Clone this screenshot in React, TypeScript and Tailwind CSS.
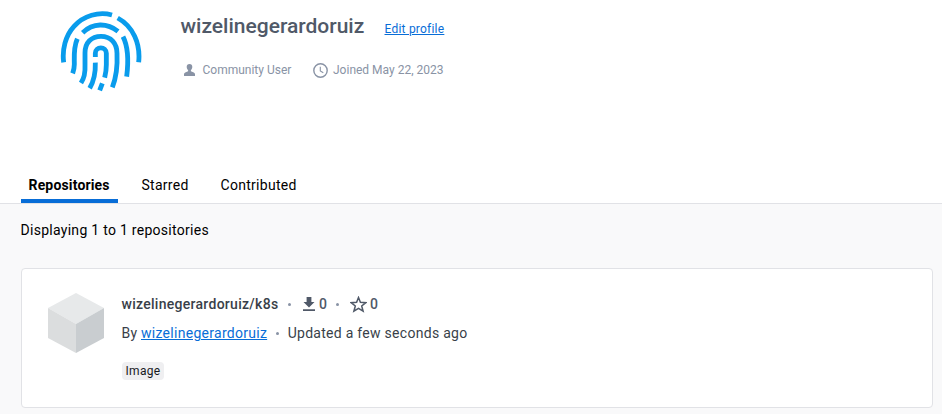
function Fingerprint() {
  return (
    <svg className="h-[82px] w-[82px] shrink-0" viewBox="30 30 246 246" fill="none" stroke="#099cec" strokeWidth="14.5">
      <path d="M41 187C36 150 46 107 72 79C101 47 146 34 186 45M203 54C249 79 272 130 266 187" />
      <path d="M98 98C129 68 171 68 204 94M82 116C70 143 73 171 73 193C73 202 71 212 68 220M219 110C234 139 235 190 230 230" />
      <path d="M93 249C103 234 106 214 105 195V159C105 128 124 109 153 109C183 109 201 130 201 160C203 202 198 234 187 262" />
      <path d="M136 171V160C136 138 169 138 169 160V194C169 209 167 221 164 233M136 188C137 219 130 246 119 265M157 250L149 271" />
    </svg>
  );
}

function Dot() {
  return <span className="h-[3px] w-[3px] shrink-0 rounded-full bg-[#8993a5]" />;
}

function Cube() {
  return (
    <svg className="h-[60px] w-[56px] shrink-0" viewBox="0 0 56 60">
      <path fill="#e7e9ea" d="M28 0L56 15L28 31L0 15Z" />
      <path fill="#dbddde" d="M0 15L28 31V60L0 45Z" />
      <path fill="#c9cdd0" d="M56 15L28 31V60L56 45Z" />
    </svg>
  );
}

export default function App() {
  return (
    <div className="flex h-[414px] w-full flex-col overflow-hidden bg-white font-['Roboto',sans-serif] text-black">
      <header className="flex h-[167px] pl-[60px] pt-[10px]">
        <Fingerprint />
        <div className="pl-[38.5px]">
          <div className="flex h-8 items-center">
            <h1 className="w-[204px] whitespace-nowrap text-[21px] font-medium leading-8 text-[#505968]">wizelinegerardoruiz</h1>
            <a href="#" className="mt-[6px] text-xs leading-4 tracking-[0.22px] text-[#086dd7] underline">Edit profile</a>
          </div>
          <div className="mt-5 flex h-4 items-center text-xs leading-4 text-[#8993a5]">
            <svg className="ml-[3px] mr-[8px] h-3 w-[11px]" viewBox="0 0 11 12" fill="currentColor">
              <path d="M5.5 0C3.7 0 2.6 1.3 2.7 3C2.8 4.4 3.3 5.5 4.1 6.2V7.2L1.2 8.5C.4 8.9 0 9.4 0 10.2V12H11V10.2C11 9.4 10.6 8.9 9.8 8.5L6.9 7.2V6.2C7.7 5.5 8.2 4.4 8.3 3C8.4 1.3 7.3 0 5.5 0Z" />
            </svg>
            <span className="w-[110px]">Community User</span>
            <svg className="mr-[5.5px] h-[15px] w-[15px]" viewBox="0 0 15 15" fill="none" stroke="currentColor" strokeWidth="1.4">
              <circle cx="7.5" cy="7.5" r="6.7" />
              <path d="M7.3 3.7V7.9L10.3 9.7" strokeWidth="1.1" />
            </svg>
            <span>Joined May 22, 2023</span>
          </div>
        </div>
      </header>
      <nav className="flex h-[37px] border-b border-[#e1e2e6] pl-[21px] text-sm leading-9 tracking-[0.28px]">
        <a className="h-9 w-[97px] border-b-4 border-[#086dd7] pl-[7.5px] font-bold tracking-[0.16px]">Repositories</a>
        <a className="ml-[23.5px] w-[79px]">Starred</a>
        <a>Contributed</a>
      </nav>
      <main className="flex-1 bg-[#f9f9fa] pl-[21px] pr-[9px] pt-4">
        <p className="-ml-[0.5px] text-sm leading-5 tracking-[0.28px]">Displaying 1 to 1 repositories</p>
        <article className="mt-7 flex h-[140px] rounded-sm border border-[#e1e2e6] bg-white pl-[26px] pt-6 text-[#393f49]">
          <Cube />
          <div className="pl-[17.5px] text-sm tracking-[0.28px]">
            <div className="mt-px flex h-5 items-center leading-5">
              <span className="mr-[9px] w-[157px] font-medium">wizelinegerardoruiz/k8s</span>
              <Dot />
              <svg className="ml-3 mr-[4.5px] h-[14px] w-3" viewBox="0 0 12 14" fill="#505968">
                <path d="M3.6 0H8.4V5H11.5L6 10.5L.5 5H3.6ZM0 12.3H12V14H0Z" />
              </svg>
              <span className="mr-[9px] w-2 font-medium text-[#505968]">0</span>
              <Dot />
              <svg className="ml-[11px] mr-[3px] h-[17px] w-[17px]" viewBox="0 0 17 17" fill="none" stroke="#505968" strokeWidth="1.5">
                <path d="M8.5 1.5L10.4 6.2L15.9 6.7L11.7 10L13.1 15.2L8.5 12.4L3.9 15.2L5.3 10L1.1 6.7L6.6 6.2Z" />
              </svg>
              <span className="font-medium text-[#505968]">0</span>
            </div>
            <div className="mt-[9px] flex h-5 items-center leading-5">
              <span className="w-[19.5px]">By</span>
              <a href="#" className="mr-[8.5px] text-[#086dd7] underline">wizelinegerardoruiz</a>
              <Dot />
              <span className="ml-[9px]">Updated a few seconds ago</span>
            </div>
            <div className="mt-[19px] flex h-[18px] w-[42px] items-center justify-center rounded bg-[#efeff1] pl-px text-xs leading-[18px] tracking-[0.3px] text-[#17191e]">Image</div>
          </div>
        </article>
      </main>
    </div>
  );
}
